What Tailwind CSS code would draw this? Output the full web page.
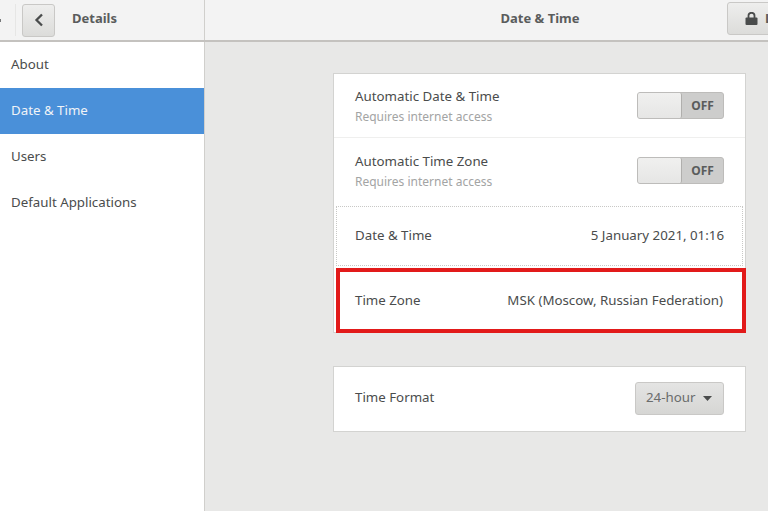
<!DOCTYPE html>
<html lang="en">
<head>
    <meta charset="UTF-8">
    <title>Date & Time</title>
    <script src="https://cdn.jsdelivr.net/npm/@tailwindcss/browser@4"></script>
</head>
<body class="w-[768px] h-[511px] overflow-hidden bg-[#e8e8e7] font-['Noto_Sans',sans-serif] text-[13.3px] text-[#4a4c4c]">
    <!-- Header -->
    <header class="flex h-[42px] bg-[#f3f3f3] border-b-2 border-[#c4c2bf]">
        <div class="flex items-center w-[205px] shrink-0 border-r border-[#d0cfcc]">
            <div class="flex items-center w-[16px] h-[32px] border-r border-[#e6e6e5] shrink-0">
                <div class="w-[1px] h-[3px] bg-[#77797a]"></div>
            </div>
            <button class="ml-[6px] flex items-center justify-center w-[33px] h-[33px] rounded-[3px] border border-[#c9c8c6] bg-gradient-to-b from-[#eeeeed] to-[#dcdcda]">
                <svg width="12" height="14" viewBox="0 0 12 14"><path d="M9 1.5 L3.5 7 L9 12.5" fill="none" stroke="#4a4c4c" stroke-width="2.3"/></svg>
            </button>
            <span class="ml-[17px] pb-[3px] text-[13px] font-bold text-[#5a5c5c]">Details</span>
        </div>
        <div class="relative flex-1 flex items-center justify-center pl-[107px] pb-[3px]">
            <span class="text-[13px] font-bold text-[#5a5c5c]">Date &amp; Time</span>
            <!-- cut off by the window edge -->
            <button class="absolute left-[522px] top-[2px] flex items-center w-[70px] h-[33px] pl-[17px] rounded-[3px] border border-[#c9c8c6] bg-gradient-to-b from-[#eeeeed] to-[#dcdcda]">
                <svg class="shrink-0" width="13" height="13" viewBox="0 0 13 13"><path d="M3.5 6V3.8a3 3 0 0 1 6 0V6" fill="none" stroke="#4a4c4c" stroke-width="1.8"/><rect x="0.5" y="5.5" width="12" height="7.5" rx="1" fill="#4a4c4c"/></svg>
                <span class="ml-[7px] text-[13px] font-bold text-[#5a5c5c]">L</span>
            </button>
        </div>
    </header>

    <div class="flex h-[469px]">
        <!-- Sidebar -->
        <nav class="w-[205px] shrink-0 bg-white border-r border-[#d0cfcc]">
            <div class="flex items-center h-[46px] pl-[11px] pb-[1px]">About</div>
            <div class="flex items-center h-[46px] pl-[11px] pb-[1px] bg-[#4a90d9] text-[#f0f3f7]">Date &amp; Time</div>
            <div class="flex items-center h-[46px] pl-[11px] pb-[1px]">Users</div>
            <div class="flex items-center h-[46px] pl-[11px] pb-[1px]">Default Applications</div>
        </nav>

        <!-- Content -->
        <main class="flex-1 pt-[31px] pl-[128px]">
            <section class="w-[413px] bg-white border border-[#d3d3d1]">
                <div class="flex items-center justify-between h-[64px] pl-[21px] pr-[21px] border-b border-[#efefee]">
                    <div class="pt-[1px]">
                        <div class="leading-[20px]">Automatic Date &amp; Time</div>
                        <div class="leading-[20px] pt-[1px] text-[12px] text-[#a3a4a4]">Requires internet access</div>
                    </div>
                    <div class="flex w-[87px] h-[27px] rounded-[3px] border border-[#bdbcba] bg-[#cdcdcc]">
                        <div class="w-[44px] rounded-[2px] bg-gradient-to-b from-[#f0f0ef] to-[#e6e6e5] border-r border-[#b0afad]"></div>
                        <div class="flex-1 flex items-center justify-center text-[12px] font-bold text-[#5a5c5c]">OFF</div>
                    </div>
                </div>
                <div class="flex items-center justify-between h-[65px] pl-[21px] pr-[21px]">
                    <div class="pt-[1px]">
                        <div class="leading-[20px]">Automatic Time Zone</div>
                        <div class="leading-[20px] pt-[1px] text-[12px] text-[#a3a4a4]">Requires internet access</div>
                    </div>
                    <div class="flex w-[87px] h-[27px] rounded-[3px] border border-[#bdbcba] bg-[#cdcdcc]">
                        <div class="w-[44px] rounded-[2px] bg-gradient-to-b from-[#f0f0ef] to-[#e6e6e5] border-r border-[#b0afad]"></div>
                        <div class="flex-1 flex items-center justify-center text-[12px] font-bold text-[#5a5c5c]">OFF</div>
                    </div>
                </div>
                <div class="flex items-center justify-between h-[60px] mt-[3px] ml-[2px] mr-[2px] pl-[18px] pr-[18px] pb-[1px] border border-dotted border-[#c8c8c6]">
                    <span>Date &amp; Time</span>
                    <span>5 January 2021, 01:16</span>
                </div>
                <div class="flex items-center justify-between h-[65px] mt-[2px] ml-[2px] -mr-[1px] pl-[15px] pr-[19px] border-[4px] border-[#e21a1a] -mb-[1px]">
                    <span>Time Zone</span>
                    <span>MSK (Moscow, Russian Federation)</span>
                </div>
            </section>

            <section class="flex items-center justify-between w-[413px] h-[66px] mt-[33px] pl-[21px] pr-[21px] bg-white border border-[#d3d3d1]">
                <span class="pb-[3px]">Time Format</span>
                <button class="flex items-center w-[89px] h-[33px] mb-[1px] pl-[10px] pb-[2px] rounded-[3px] border border-[#c9c8c6] bg-gradient-to-b from-[#e4e4e3] to-[#d6d6d4] text-[#6a6c6c]">
                    24-hour
                    <svg class="ml-[8px] mt-[2px]" width="9" height="5" viewBox="0 0 9 5"><path d="M0 0H9L4.5 5Z" fill="#4a4c4c"/></svg>
                </button>
            </section>
        </main>
    </div>
</body>
</html>
